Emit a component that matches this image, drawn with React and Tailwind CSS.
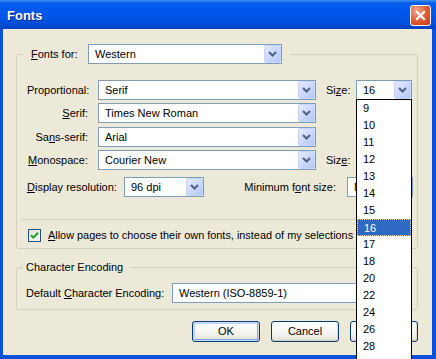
import React from 'react';

const sizes = ['9', '10', '11', '12', '13', '14', '15', '16', '17', '18', '20', '22', '24', '26', '28'];

function Chevron() {
  return (
    <svg width="9" height="6" viewBox="0 0 9 6">
      <path d="M1 1l3.5 3.5L8 1" fill="none" stroke="#4D6185" strokeWidth="2" />
    </svg>
  );
}

function Combo({ value, className = '' }) {
  return (
    <div className={`flex h-[20px] shrink-0 border border-[#7F9DB9] bg-white ${className}`}>
      <span className="flex-1 truncate pl-[6px] leading-[18px]">{value}</span>
      <span className="flex w-[17px] items-center justify-center rounded-[2px] border border-[#C6D5FC] bg-[linear-gradient(135deg,#E3EBFE,#B4C8F6)]">
        <Chevron />
      </span>
    </div>
  );
}

function PushButton({ children, isDefault }) {
  return (
    <div
      className={`flex h-[21px] w-[68px] items-center justify-center rounded-[3px] border border-[#003C74] bg-[linear-gradient(to_bottom,#FFFFFF,#F4F4F0_60%,#E2E0D5)] ${
        isDefault
          ? 'shadow-[inset_0_0_0_1px_#CDDCF8,inset_1px_1px_0_1px_#BCD2F8,inset_-1px_-1px_0_1px_#7FA8EC]'
          : 'shadow-[inset_0_-1px_0_#D6D0C5,inset_-1px_0_0_#E0DCD0]'
      }`}
    >
      {children}
    </div>
  );
}

function Row({ label, value, sizeLabel, className = '' }) {
  return (
    <div className={`flex h-[20px] items-center pl-[6px] ${className}`}>
      <span className="w-[61px] text-right">{label}</span>
      <Combo value={value} className="ml-[10px] w-[218px]" />
      {sizeLabel && (
        <>
          <span className="ml-[10px] w-[30px]">{sizeLabel}</span>
          <Combo value="16" className="w-[56px]" />
        </>
      )}
    </div>
  );
}

export default function App() {
  return (
    <div className="relative flex h-[359px] w-[436px] flex-col overflow-hidden bg-[#0B4FDB] font-['Liberation_Sans',Arial,sans-serif] text-[11px] leading-[13px] text-black">
      {/* title bar */}
      <div className="flex h-[29px] shrink-0 items-center justify-between bg-[linear-gradient(to_bottom,#3D8FF8_0px,#0A5FEA_3px,#0058EE_8px,#0054E3_20px,#0049D2_26px,#003CC0_29px)] pl-[7px] pr-[5px] pt-[2px]">
        <span className="text-[13px] font-bold text-white [text-shadow:1px_1px_#0B1C8A]">Fonts</span>
        <div className="flex h-[21px] w-[21px] items-center justify-center rounded-[3px] border border-white bg-[radial-gradient(circle_at_30%_25%,#F4A487,#DA5A33_55%,#C1401C)]">
          <svg width="11" height="11" viewBox="0 0 11 11">
            <path d="M2 2l7 7M9 2l-7 7" stroke="white" strokeWidth="2.2" strokeLinecap="square" />
          </svg>
        </div>
      </div>

      {/* client area */}
      <div className="mb-[4px] ml-[3px] mr-[4px] flex flex-1 flex-col bg-[#ECE9D8] pl-[13px] pr-[14px] pt-[15px]">
        <fieldset className="w-[402px] rounded-[3px] border border-[#D0D0BF] px-[4px] pb-[6px] pt-[16px]">
          <legend className="ml-[2px] flex items-center pl-[8px] pr-[8px]">
            <span className="w-[57px]">
              <span className="underline">F</span>onts for:
            </span>
            <Combo value="Western" className="w-[194px]" />
          </legend>

          <Row label="Proportional:" value="Serif" sizeLabel={<>Si<span className="underline">z</span>e:</>} />
          <Row label={<><span className="underline">S</span>erif:</>} value="Times New Roman" className="mt-[3px]" />
          <Row label={<>Sa<span className="underline">n</span>s-serif:</>} value="Arial" className="mt-[4px]" />
          <Row
            label={<><span className="underline">M</span>onospace:</>}
            value="Courier New"
            sizeLabel={<>Siz<span className="underline">e</span>:</>}
            className="mt-[3px]"
          />

          <div className="mt-[7px] flex h-[20px] items-center pl-[6px]">
            <span className="w-[97px]">
              <span className="underline">D</span>isplay resolution:
            </span>
            <Combo value="96 dpi" className="w-[80px]" />
            <span className="flex-1" />
            <span>
              Minimum f<span className="underline">o</span>nt size:
            </span>
            <Combo value="None" className="ml-[11px] w-[66px]" />
          </div>

          <div className="mt-[22px] border-t border-[#D0D0BF]" />

          <div className="mt-[9px] flex h-[13px] items-center pl-[7px]">
            <span className="flex h-[13px] w-[13px] items-center justify-center border border-[#1C5180] bg-[linear-gradient(135deg,#DCDCD7,#FFFFFF)]">
              <svg width="9" height="9" viewBox="0 0 9 9">
                <path d="M1 4.2l2.4 2.4L8 1.8" fill="none" stroke="#21A121" strokeWidth="2" />
              </svg>
            </span>
            <span className="ml-[7px] whitespace-nowrap text-[10.9px]">
              <span className="underline">A</span>llow pages to choose their own fonts, instead of my selections
            </span>
          </div>
        </fieldset>

        <fieldset className="mt-[11px] w-[402px] rounded-[3px] border border-[#D0D0BF] px-[4px] pb-[6px] pt-[9px]">
          <legend className="ml-[2px] pl-[3px] pr-[7px] leading-[14px]">Character Encoding</legend>
          <div className="flex h-[20px] items-center pl-[5px]">
            <span className="w-[146px] whitespace-nowrap">
              Default <span className="underline">C</span>haracter Encoding:
            </span>
            <Combo value="Western (ISO-8859-1)" className="w-[240px]" />
          </div>
        </fieldset>

        <div className="mt-[11px] flex w-[402px] justify-end gap-[11px]">
          <PushButton isDefault>OK</PushButton>
          <PushButton>Cancel</PushButton>
          <PushButton>Help</PushButton>
        </div>
      </div>

      {/* open size dropdown list */}
      <div className="absolute left-[356px] top-[99px] h-[262px] w-[56px] overflow-hidden border border-black bg-white">
        {sizes.map((s) => (
          <div
            key={s}
            className={`h-[17px] pl-[6px] leading-[17px] ${
              s === '16' ? 'border border-dotted border-[#EBD9A0] bg-[#316AC5] pl-[5px] leading-[15px] text-white' : ''
            }`}
          >
            {s}
          </div>
        ))}
      </div>
    </div>
  );
}
